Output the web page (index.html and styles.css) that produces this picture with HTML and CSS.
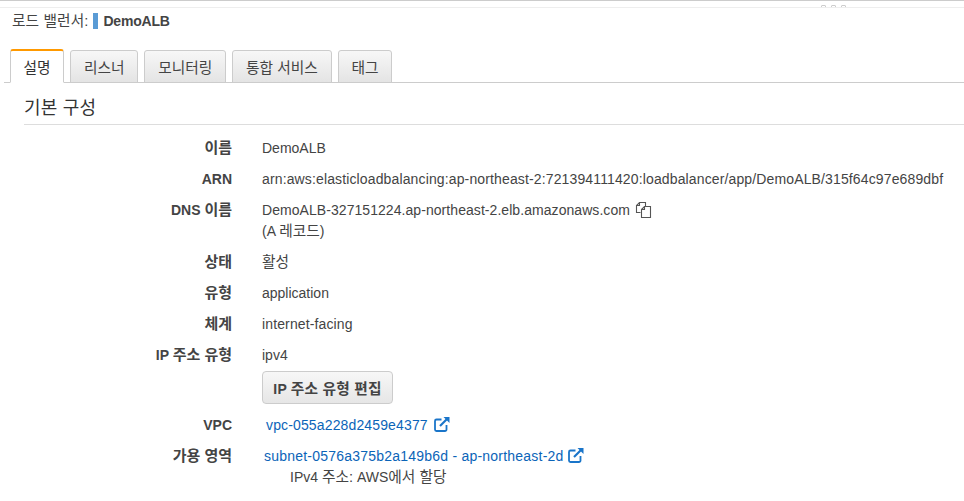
FILE: index.html
```html
<!DOCTYPE html>
<html lang="ko">
<head>
<meta charset="utf-8">
<title>로드 밸런서: DemoALB</title>
<link rel="stylesheet" href="styles.css">
</head>
<body>
<div class="top-rule"></div>
<div class="grip"><i></i><i></i><i></i></div>
<header class="title">
  <span class="ko">로드 밸런서:</span>
  <span class="swatch"></span>
  <strong>DemoALB</strong>
</header>
<nav class="tabs">
  <a class="tab active">설명</a>
  <a class="tab">리스너</a>
  <a class="tab">모니터링</a>
  <a class="tab">통합 서비스</a>
  <a class="tab">태그</a>
</nav>
<main class="panel">
  <h2>기본 구성</h2>
  <dl class="rows">
    <div class="row"><dt class="ko">이름</dt><dd>DemoALB</dd></div>
    <div class="row"><dt>ARN</dt><dd class="arn">arn:aws:elasticloadbalancing:ap-northeast-2:721394111420:loadbalancer/app/DemoALB/315f64c97e689dbf</dd></div>
    <div class="row row-dns"><dt>DNS <span class="ko">이름</span></dt><dd><span class="dns">DemoALB-327151224.ap-northeast-2.elb.amazonaws.com</span>
      <svg class="copy" width="17" height="17" viewBox="0 0 17 17" fill="none" stroke="#555" stroke-width="1.100"><path d="M5.500 11.500H1.500V4.500L4.500 1.500H10.500V5.500"/><path d="M4.500 1.500V4.500H1.500"/><path d="M6.500 8.500L9.500 5.500H15.500V16.500H6.500Z"/><path d="M9.500 5.500V8.500H6.500"/></svg>
      <div class="second">(A <span class="ko">레코드</span>)</div></dd></div>
    <div class="row"><dt class="ko">상태</dt><dd class="ko">활성</dd></div>
    <div class="row"><dt class="ko">유형</dt><dd>application</dd></div>
    <div class="row"><dt class="ko">체계</dt><dd class="facing">internet-facing</dd></div>
    <div class="row row-ip"><dt>IP <span class="ko">주소 유형</span></dt><dd>ipv4<button class="btn">IP <span class="ko">주소 유형 편집</span></button></dd></div>
    <div class="row row-vpc"><dt>VPC</dt><dd class="vpc"><a>vpc-055a228d2459e4377<svg class="ext" width="16" height="16" viewBox="0 0 16 16" fill="none" stroke="#1a75c9" stroke-width="1.800"><path d="M7.500 3.500H2.500A1.500 1.500 0 0 0 1 5V13.500A1.500 1.500 0 0 0 2.500 15H11A1.500 1.500 0 0 0 12.500 13.500V9"/><path d="M6 10L13 3" stroke-width="2.200"/><path d="M9.500 1H15.500V7Z" fill="#1a75c9" stroke="none"/></svg></a></dd></div>
    <div class="row"><dt class="ko">가용 영역</dt><dd class="subnet"><a>subnet-0576a375b2a149b6d - ap-northeast-2d<svg class="ext" width="16" height="16" viewBox="0 0 16 16" fill="none" stroke="#1a75c9" stroke-width="1.800"><path d="M7.500 3.500H2.500A1.500 1.500 0 0 0 1 5V13.500A1.500 1.500 0 0 0 2.500 15H11A1.500 1.500 0 0 0 12.500 13.500V9"/><path d="M6 10L13 3" stroke-width="2.200"/><path d="M9.500 1H15.500V7Z" fill="#1a75c9" stroke="none"/></svg></a><div class="ipv4">IPv4 <span class="ko">주소:</span> AWS<span class="ko">에서 할당</span></div></dd></div>
  </dl>
</main>
</body>
</html>
```

FILE: styles.css
```css
* { box-sizing: border-box; }
html, body { margin: 0; height: 501px; overflow: hidden; background: #fff; }
body {
  position: relative;
  font-family: "Liberation Sans", "Noto Sans CJK KR", sans-serif;
  font-size: 14px;
  color: #444;
}
.ko { font-size: 14.7px; }
.top-rule {
  height: 8px;
  border-top: 1px solid #ccc;
  border-bottom: 1px solid #eee;
}
.grip { position: absolute; left: 821px; top: 5px; height: 2px; display: flex; gap: 5px; overflow: hidden; }
.grip i { width: 5px; height: 5px; border: 1px solid #ccc; border-radius: 1px; }
.title {
  height: 41px;
  padding: 5px 0 0 12px;
  display: flex;
  align-items: flex-start;
  line-height: 17px;
  color: #444;
}
.title .ko { letter-spacing: .1px; }
.swatch { width: 5px; height: 16px; margin: 0 5px 0 5px; background: #5a9bd5; }
.title strong { font-weight: 700; letter-spacing: -.2px; }
.tabs {
  height: 34px;
  margin-left: 4px;
  padding-left: 6px;
  display: flex;
  gap: 6px;
  align-items: flex-end;
  border-bottom: 1px solid #ccc;
}
.tab {
  height: 33px;
  padding: 0 12.9px;
  margin-bottom: -1px;
  display: flex;
  align-items: center;
  border: 1px solid #ccc;
  border-radius: 3px 3px 0 0;
  background: linear-gradient(#f7f7f7, #e4e4e4);
  font-size: 14.700px;
  color: #444;
}
.tab.active {
  height: 34px;
  width: 54px;
  padding: 0;
  justify-content: center;
  border-top: 2px solid #f90;
  border-bottom-color: #fff;
  background: #fff;
  color: #333;
}
.panel { padding: 0 0 0 24px; }
.panel h2 {
  margin: 0;
  height: 42px;
  padding-top: 13px;
  line-height: 24px;
  font-size: 18px;
  font-weight: 400;
  letter-spacing: .2px;
  color: #333;
  border-bottom: 1px solid #ddd;
}
.rows { margin: 0; padding-top: 13px; }
.row {
  display: grid;
  grid-template-columns: 208px 1fr;
  column-gap: 30px;
  padding-bottom: 11px;
  line-height: 20px;
}
.row dt { text-align: right; font-weight: 700; color: #444; }
.row dt.ko, .row dt .ko { font-size: 15px; }
.row dd { margin: 0; color: #444; }
.arn { letter-spacing: .134px; }
.dns { letter-spacing: .06px; }
.facing { letter-spacing: .13px; }
.second { margin-top: 1px; }
.copy { vertical-align: -3px; margin-left: 1px; }
.btn {
  display: block;
  width: 131px;
  height: 33px;
  margin-top: 6px;
  padding: 0;
  border: 1px solid #ccc;
  border-radius: 4px;
  background: linear-gradient(#f7f7f7, #e6e6e6);
  font: 700 14px "Liberation Sans", "Noto Sans CJK KR", sans-serif;
  letter-spacing: .2px;
  color: #444;
}
.row a { color: #0b64b8; }
.ext { vertical-align: -2px; margin-left: 6px; }
.vpc { padding-left: 4px; letter-spacing: .14px; }
.subnet { padding-left: 2px; letter-spacing: .22px; }
.subnet .ext { margin-left: 4px; }
.ipv4 { padding: 1px 0 0 26px; letter-spacing: 0; }
```
